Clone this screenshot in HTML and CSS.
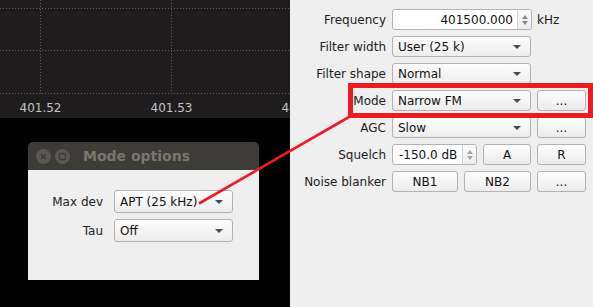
FILE: index.html
```html
<!DOCTYPE html>
<html>
<head>
<meta charset="utf-8">
<link rel="stylesheet" href="styles.css">
</head>
<body>
<div class="screen">
  <div class="left">
    <svg class="spectrum" width="290" height="118" viewBox="0 0 290 118">
      <g class="grid">
        <line x1="0" y1="8.5" x2="290" y2="8.5"/>
        <line x1="0" y1="50.5" x2="290" y2="50.5"/>
        <line x1="0" y1="93.5" x2="290" y2="93.5"/>
        <line x1="40.5" y1="0" x2="40.5" y2="94"/>
        <line x1="171.5" y1="0" x2="171.5" y2="94"/>
      </g>
      <g class="axis">
        <text x="40.5" y="112">401.52</text>
        <text x="171.5" y="112">401.53</text>
        <text x="302.5" y="112">401.54</text>
      </g>
    </svg>
    <div class="desktop">
      <div class="dialog">
        <div class="titlebar">
          <span class="wbtn wclose">
            <svg width="15" height="15" viewBox="0 0 15 15"><path d="M5 5 L10 10 M10 5 L5 10" stroke="#3a3935" stroke-width="1.3"/></svg>
          </span>
          <span class="wbtn">
            <svg width="15" height="15" viewBox="0 0 15 15"><rect x="4.5" y="4.5" width="6" height="6" rx="1" fill="none" stroke="#3a3935" stroke-width="1.3"/></svg>
          </span>
          <span class="wtitle">Mode options</span>
        </div>
        <div class="dlg-body">
          <label class="dlabel">Max dev</label>
          <div class="combo dcombo">APT (25 kHz)<span class="arrow"></span></div>
          <label class="dlabel">Tau</label>
          <div class="combo dcombo">Off<span class="arrow"></span></div>
        </div>
      </div>
    </div>
  </div>
  <div class="panel">
    <div class="form">
      <label class="lbl">Frequency</label>
      <div class="row">
        <div class="spin freq"><span class="spin-text">401500.000</span><span class="spin-arrows"><i class="up"></i><i class="down"></i></span></div>
        <span class="unit">kHz</span>
      </div>
      <label class="lbl">Filter width</label>
      <div class="row"><div class="combo wide">User (25 k)<span class="arrow"></span></div></div>
      <label class="lbl">Filter shape</label>
      <div class="row"><div class="combo wide">Normal<span class="arrow"></span></div></div>
      <label class="lbl">Mode</label>
      <div class="row"><div class="combo wide">Narrow FM<span class="arrow"></span></div><button class="btn b3">...</button></div>
      <label class="lbl">AGC</label>
      <div class="row"><div class="combo wide">Slow<span class="arrow"></span></div><button class="btn b3">...</button></div>
      <label class="lbl">Squelch</label>
      <div class="row">
        <div class="spin sq"><span class="spin-text text-start">-150.0 dB</span><span class="spin-arrows"><i class="up"></i><i class="down"></i></span></div>
        <button class="btn ba">A</button><button class="btn b3">R</button>
      </div>
      <label class="lbl">Noise blanker</label>
      <div class="row"><button class="btn b1">NB1</button><button class="btn b2">NB2</button><button class="btn b3">...</button></div>
    </div>
  </div>
  <svg class="annot" width="593" height="307" viewBox="0 0 593 307">
    <rect x="350.5" y="85.5" width="240" height="30" fill="none" stroke="#ec1c24" stroke-width="5"/>
    <line x1="349" y1="117" x2="199" y2="203.5" stroke="#ec1c24" stroke-width="2.6"/>
  </svg>
</div>
</body>
</html>
```
FILE: styles.css
```css
* { box-sizing: border-box; }
html, body { margin: 0; padding: 0; }
body {
  width: 593px;
  height: 307px;
  overflow: hidden;
  font-family: "DejaVu Sans", sans-serif;
  font-size: 12px;
  color: #1c1c1c;
  background: #efefef;
}
.screen {
  position: relative;
  display: flex;
  width: 593px;
  height: 307px;
}
.left {
  width: 290px;
  display: flex;
  flex-direction: column;
  background: #000;
}
.spectrum {
  display: block;
  background: #1e1c1d;
  flex: none;
}
.grid line {
  stroke: #5e5c5d;
  stroke-width: 1;
  stroke-dasharray: 1 2;
}
.axis text {
  fill: #c4c4c4;
  font-family: "DejaVu Sans", sans-serif;
  font-size: 12px;
  text-anchor: middle;
}
.desktop {
  position: relative;
  flex: 1;
  background: #000;
}
.dialog {
  position: absolute;
  left: 28px;
  top: 24px;
  width: 231px;
  display: flex;
  flex-direction: column;
}
.titlebar {
  height: 28px;
  background: #3c3b37;
  border-radius: 5px 5px 0 0;
  display: flex;
  align-items: center;
  padding-left: 8px;
  gap: 4px;
}
.wbtn {
  width: 15px;
  height: 15px;
  border-radius: 50%;
  background: #5a5853;
  display: flex;
}
.wtitle {
  margin-left: 9px;
  font-weight: bold;
  font-size: 14px;
  color: #7a776f;
}
.dlg-body {
  height: 110px;
  background: #efefef;
  display: grid;
  grid-template-columns: 75px 119px;
  grid-auto-rows: 23px;
  column-gap: 11px;
  row-gap: 6px;
  padding-top: 20px;
  align-content: start;
}
.dlabel {
  text-align: right;
  align-self: center;
  font-size: 12px;
  color: #222;
}
.combo {
  position: relative;
  height: 21px;
  border: 1px solid #b2b2b2;
  border-radius: 3px;
  background: linear-gradient(#fdfdfd, #ededed);
  padding-left: 5px;
  display: flex;
  align-items: center;
  color: #111;
  white-space: nowrap;
}
.dcombo { height: 23px; }
.arrow {
  position: absolute;
  right: 9px;
  top: 50%;
  margin-top: -2px;
  width: 0;
  height: 0;
  border-left: 4px solid transparent;
  border-right: 4px solid transparent;
  border-top: 4px solid #4a4a4a;
}
.panel {
  flex: 1;
  background: #efefef;
  padding-top: 9px;
}
.form {
  display: grid;
  grid-template-columns: 96px 194px;
  grid-auto-rows: 21px;
  column-gap: 6px;
  row-gap: 6px;
}
.lbl {
  text-align: right;
  align-self: center;
  white-space: nowrap;
  color: #1c1c1c;
}
.row {
  display: flex;
  gap: 6px;
  align-items: center;
}
.wide { width: 139px; }
.spin {
  height: 21px;
  border: 1px solid #b2b2b2;
  border-radius: 3px;
  background: #fff;
  display: flex;
  color: #111;
}
.freq { width: 140px; }
.sq { width: 85px; }
.spin-text {
  flex: 1;
  display: flex;
  align-items: center;
  justify-content: flex-end;
  padding-right: 4px;
  white-space: nowrap;
}
.spin-text.text-start {
  justify-content: flex-start;
  padding-left: 6px;
  padding-right: 0;
}
.spin-arrows {
  width: 14px;
  border-left: 1px solid #d0d0d0;
  display: flex;
  flex-direction: column;
  align-items: center;
  justify-content: center;
  gap: 2px;
  background: linear-gradient(#fafafa, #efefef);
  border-radius: 0 2px 2px 0;
}
.spin-arrows i {
  width: 0;
  height: 0;
  border-left: 3px solid transparent;
  border-right: 3px solid transparent;
}
.spin-arrows .up { border-bottom: 4px solid #8a8a8a; }
.spin-arrows .down { border-top: 4px solid #8a8a8a; }
.sq .spin-arrows .up { border-bottom-color: #a5a5a5; }
.sq .spin-arrows .down { border-top-color: #a5a5a5; }
.unit { margin-left: -1px; }
.btn {
  height: 21px;
  padding: 0;
  border: 1px solid #b2b2b2;
  border-radius: 3px;
  background: linear-gradient(#fdfdfd, #ececec);
  font-family: "DejaVu Sans", sans-serif;
  font-size: 12px;
  color: #111;
  display: flex;
  align-items: center;
  justify-content: center;
}
.b1 { width: 66px; }
.b2 { width: 67px; }
.ba { width: 48px; }
.b3 { width: 49px; }
.annot {
  position: absolute;
  left: 0;
  top: 0;
  pointer-events: none;
}
```
